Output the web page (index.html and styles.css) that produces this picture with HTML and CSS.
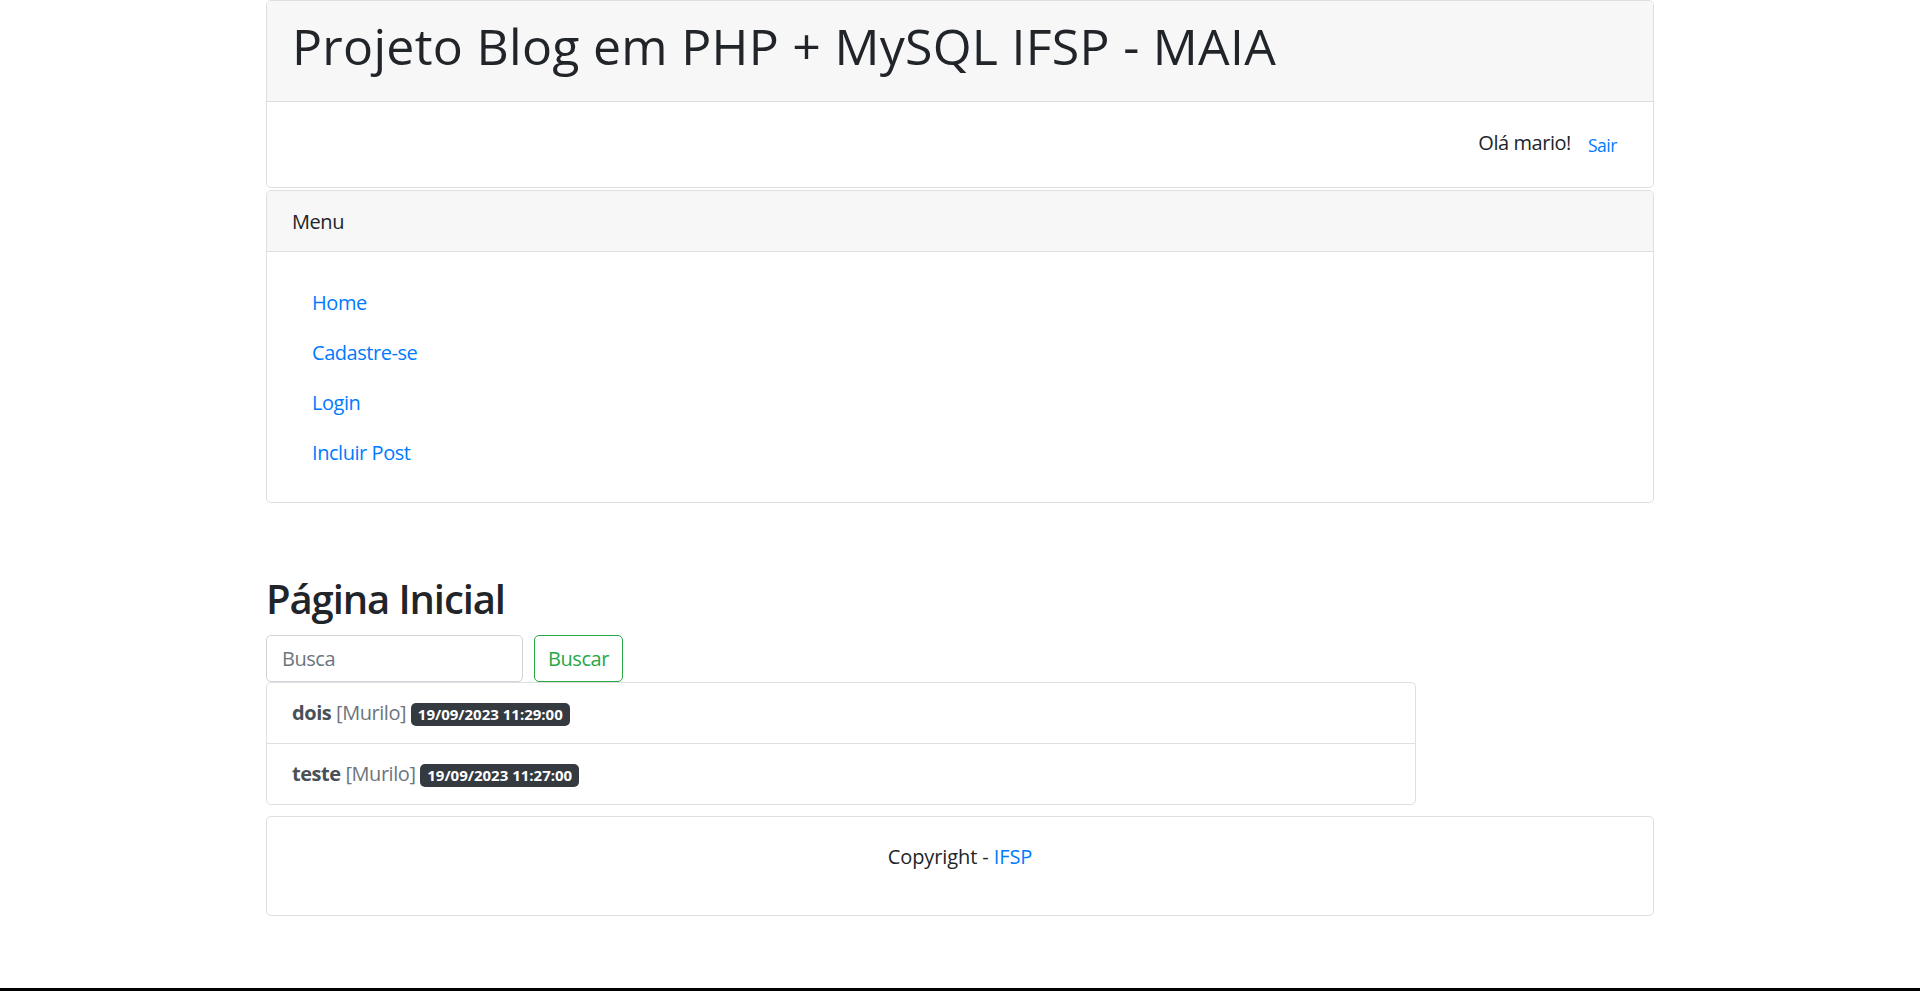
FILE: index.html
```html
<!DOCTYPE html>
<html lang="pt-br">
<head>
<meta charset="utf-8">
<title>Projeto Blog em PHP + MySQL IFSP - MAIA</title>
<link rel="stylesheet" href="styles.css">
</head>
<body>
<div class="page">
  <div class="container">
    <div class="card top-card">
      <div class="card-header">
        <h1 class="site-title">Projeto Blog em PHP + MySQL IFSP - MAIA</h1>
      </div>
      <div class="card-body user-bar">
        <span class="greeting">Olá mario!</span>
        <a class="logout" href="#">Sair</a>
      </div>
    </div>

    <div class="card menu-card">
      <div class="card-header">Menu</div>
      <div class="card-body">
        <ul class="nav-col">
          <li><a href="#">Home</a></li>
          <li><a href="#">Cadastre-se</a></li>
          <li><a href="#">Login</a></li>
          <li><a href="#">Incluir Post</a></li>
        </ul>
      </div>
    </div>

    <main class="content">
      <h2 class="page-title">Página Inicial</h2>
      <form class="search">
        <input class="search-input" type="text" placeholder="Busca">
        <button class="search-btn" type="button">Buscar</button>
      </form>
      <div class="post-list">
        <div class="post-item"><strong class="post-title">dois</strong> <span class="post-author">[Murilo]</span> <span class="badge">19/09/2023 11:29:00</span></div>
        <div class="post-item"><strong class="post-title">teste</strong> <span class="post-author">[Murilo]</span> <span class="badge">19/09/2023 11:27:00</span></div>
      </div>
    </main>

    <div class="card footer-card">
      <div class="card-body">
        <p class="copyright">Copyright - <a href="#">IFSP</a></p>
      </div>
    </div>
  </div>
</div>
<div class="bottom-bar"></div>
</body>
</html>
```

FILE: styles.css
```css
* { box-sizing: border-box; }

html, body { height: 100%; }

body {
  margin: 0;
  font-family: "Open Sans", "Noto Sans", sans-serif;
  font-size: 20px;
  line-height: 1.5;
  letter-spacing: -0.45px;
  color: #212529;
  background: #fff;
  display: flex;
  flex-direction: column;
  min-height: 100vh;
}

.page { flex: 1; }

.container {
  width: 1388px;
  margin: 0 auto;
}

a { color: #007bff; text-decoration: none; }

.card {
  background: #fff;
  border: 1px solid #dfdfdf;
  border-radius: 5px;
  overflow: hidden;
}

.card-header {
  background: #f7f7f7;
  border-bottom: 1px solid #dfdfdf;
  padding: 15px 25px;
}

.card-body { padding: 25px; }

.site-title {
  margin: 0 0 10px;
  font-size: 50px;
  font-weight: 400;
  line-height: 60px;
  letter-spacing: 0.28px;
}

.user-bar {
  display: flex;
  justify-content: flex-end;
  align-items: center;
  padding: 25px 25px 24px;
}

.greeting { line-height: 30px; padding-bottom: 4px; }

.logout {
  display: inline-block;
  margin-left: 6px;
  padding: 4px 10px 4px;
  font-size: 17.5px;
  line-height: 26px;
  border: 1px solid transparent;
}

.menu-card { margin-top: 2px; }

.menu-card .card-header { padding: 16px 25px 14px; }

.nav-col {
  list-style: none;
  margin: 0;
  padding: 0;
}

.nav-col a {
  display: block;
  padding: 11px 20px 9px;
}

.content { display: block; }

.page-title {
  margin: 72px 0 12px;
  font-size: 40px;
  font-weight: 600;
  line-height: 48px;
  letter-spacing: -1.1px;
}

.search {
  display: flex;
  gap: 11px;
  margin: 0;
}

.search-input {
  width: 257px;
  height: 47px;
  padding: 0 15px;
  border: 1px solid #ced4da;
  border-radius: 5px;
  font: inherit;
  letter-spacing: inherit;
  color: #495057;
  background: #fff;
}

.search-input::placeholder { color: #6c757d; }

.search-btn {
  width: 89px;
  height: 47px;
  padding: 0;
  border: 1px solid #28a745;
  border-radius: 5px;
  background: transparent;
  color: #28a745;
  font: inherit;
  letter-spacing: inherit;
}

.post-list {
  width: 1150px;
  border: 1px solid #dfdfdf;
  border-radius: 5px;
}

.post-item {
  padding: 15px 25px;
  line-height: 30px;
  color: #495057;
}

.post-item + .post-item { border-top: 1px solid #dfdfdf; }

.post-title { font-weight: 700; color: #495057; }

.post-author { color: #6c757d; }

.badge {
  display: inline-block;
  padding: 4px 7px 4px;
  font-size: 15px;
  font-weight: 700;
  line-height: 15px;
  letter-spacing: 0;
  color: #fff;
  background: #343a40;
  border-radius: 5px;
  vertical-align: 0;
}

.footer-card { margin-top: 11px; }

.copyright {
  margin: 0 0 18px;
  text-align: center;
  letter-spacing: -0.1px;
}

.bottom-bar {
  height: 3px;
  background: #000;
}
```
